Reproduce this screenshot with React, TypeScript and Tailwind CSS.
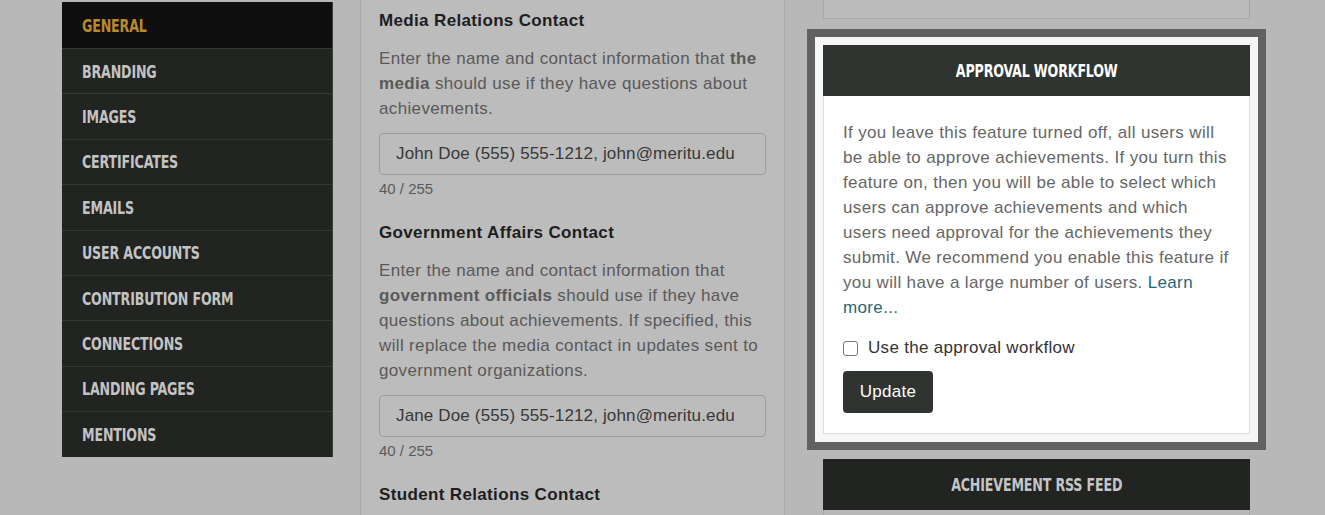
import React from "react";

const navItems = [
  "GENERAL",
  "BRANDING",
  "IMAGES",
  "CERTIFICATES",
  "EMAILS",
  "USER ACCOUNTS",
  "CONTRIBUTION FORM",
  "CONNECTIONS",
  "LANDING PAGES",
  "MENTIONS",
];

const condensed = {
  fontFamily: '"DejaVu Sans Condensed", "Liberation Sans", sans-serif',
};

function Sidebar() {
  return (
    <div className="w-[271px] shrink-0 pt-[2px]">
      <ul className="bg-[#222422] border-r border-[#3a3c3a]">
        {navItems.map((item, i) => (
          <li
            key={item}
            className={
              i === 0
                ? "h-[46px] flex items-center pl-[20px] bg-[#0f0f0f] text-[#b98a2c]"
                : "h-[45.4px] flex items-center pl-[20px] border-t border-[#363836] text-[#c3c3c3]"
            }
          >
            <span
              className="inline-block font-bold text-[18px] tracking-[-0.2px] scale-x-[0.78] origin-left whitespace-nowrap"
              style={condensed}
            >
              {item}
            </span>
          </li>
        ))}
      </ul>
    </div>
  );
}

function ContactField({
  title,
  children,
  value,
}: {
  title: string;
  children: React.ReactNode;
  value: string;
}) {
  return (
    <div className="mb-[22px]">
      <h3 className="text-[17px] leading-[24px] font-bold tracking-[0.35px] text-[#1e1e1e] mb-[13px]">
        {title}
      </h3>
      <p className="text-[17px] leading-[25px] tracking-[0.35px] text-[#595959]">{children}</p>
      <div className="mt-[12px] h-[42px] rounded-[4px] border border-[#9c9c9c] flex items-center pl-[16px] text-[17px] tracking-[0.15px] text-[#383838]">
        {value}
      </div>
      <div className="mt-[4px] text-[15px] leading-[20px] text-[#5a5a5a]">40 / 255</div>
    </div>
  );
}

function ContactsColumn() {
  return (
    <div className="w-[425px] shrink-0 ml-[27px] bg-[#bcbcbc] border-x border-[#a9a9a9] px-[18px] pt-[9px] h-[515px] overflow-hidden">
      <ContactField title="Media Relations Contact" value="John Doe (555) 555-1212, john@meritu.edu">
        Enter the name and contact information that <b>the media</b> should use if they have
        questions about achievements.
      </ContactField>
      <ContactField title="Government Affairs Contact" value="Jane Doe (555) 555-1212, john@meritu.edu">
        Enter the name and contact information that <b>government officials</b> should use if
        they have questions about achievements. If specified, this will replace the media contact
        in updates sent to government organizations.
      </ContactField>
      <h3 className="text-[17px] leading-[24px] font-bold tracking-[0.35px] text-[#1e1e1e]">
        Student Relations Contact
      </h3>
    </div>
  );
}

function RightColumn() {
  return (
    <div className="w-[427px] shrink-0 ml-[38px]">
      <div className="h-[19px] bg-[#bbbbbb] border-x border-b border-[#a8a8a8]" />

      {/* highlighted panel */}
      <div className="-mx-[16px] mt-[10px] border-[8px] border-[#616161] bg-[#f6f6f6] p-[8px]">
        <div className="bg-[#2f3430] h-[51px] flex items-center justify-center">
          <span
            className="inline-block text-white font-bold text-[18px] tracking-[-0.2px] scale-x-[0.78] origin-center whitespace-nowrap"
            style={condensed}
          >
            APPROVAL WORKFLOW
          </span>
        </div>
        <div className="bg-white border-x border-b border-[#dedede] px-[19px] pt-[24px] pb-[20px]">
          <p className="text-[17px] leading-[25px] tracking-[0.35px] text-[#666666]">
            If you leave this feature turned off, all users will be able to approve achievements.
            If you turn this feature on, then you will be able to select which users can approve
            achievements and which users need approval for the achievements they submit. We
            recommend you enable this feature if you will have a large number of users.{" "}
            <a className="text-[#1f6879]">Learn more...</a>
          </p>
          <label className="mt-[16px] flex items-center gap-[10px] text-[17px] leading-[24px] tracking-[0.3px] text-[#333333]">
            <span className="w-[15px] h-[15px] rounded-[3px] border border-[#767676] bg-white" />
            Use the approval workflow
          </label>
          <button className="mt-[11px] h-[42px] w-[90px] rounded-[4px] bg-[#2f3430] text-white text-[17px] tracking-[0.3px]">
            Update
          </button>
        </div>
      </div>

      <div className="mt-[9px] bg-[#222422] h-[51px] flex items-center justify-center">
        <span
          className="inline-block text-[#c5c5c5] font-bold text-[18px] tracking-[-0.2px] scale-x-[0.78] origin-center whitespace-nowrap"
          style={condensed}
        >
          ACHIEVEMENT RSS FEED
        </span>
      </div>
      <div className="h-[10px] border-x border-[#a8a8a8]" />
    </div>
  );
}

export default function App() {
  return (
    <div
      className="w-[1325px] h-[515px] overflow-hidden bg-[#b8b8b8] flex pl-[62px]"
      style={{ fontFamily: '"Liberation Sans", Arial, sans-serif' }}
    >
      <Sidebar />
      <ContactsColumn />
      <RightColumn />
    </div>
  );
}
